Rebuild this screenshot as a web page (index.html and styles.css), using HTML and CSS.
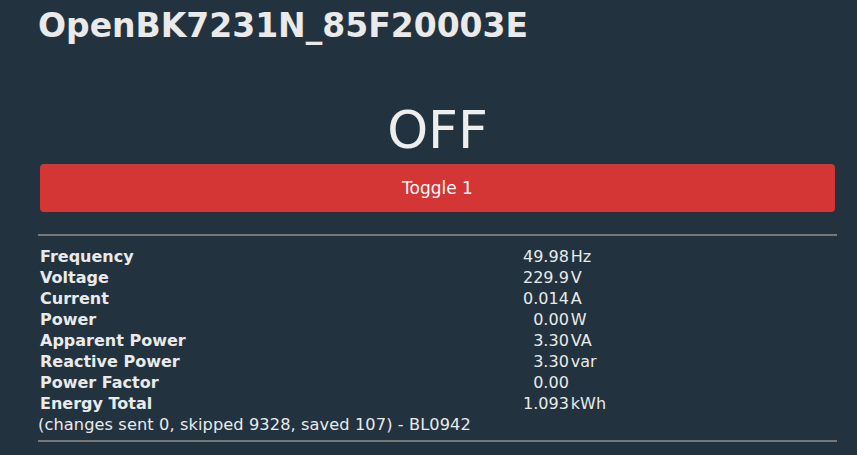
FILE: index.html
```html
<!DOCTYPE html>
<html>
<head>
<meta charset="utf-8">
<link rel="stylesheet" href="styles.css">
</head>
<body>
<div class="page">
  <h1 class="title">OpenBK7231N_85F20003E</h1>
  <div class="state">OFF</div>
  <button class="toggle">Toggle 1</button>
  <hr class="rule">
  <table class="readings">
    <tr><th>Frequency</th><td class="val">49.98</td><td class="unit">Hz</td></tr>
    <tr><th>Voltage</th><td class="val">229.9</td><td class="unit">V</td></tr>
    <tr><th>Current</th><td class="val">0.014</td><td class="unit">A</td></tr>
    <tr><th>Power</th><td class="val">0.00</td><td class="unit">W</td></tr>
    <tr><th>Apparent Power</th><td class="val">3.30</td><td class="unit">VA</td></tr>
    <tr><th>Reactive Power</th><td class="val">3.30</td><td class="unit">var</td></tr>
    <tr><th>Power Factor</th><td class="val">0.00</td><td class="unit"></td></tr>
    <tr><th>Energy Total</th><td class="val">1.093</td><td class="unit">kWh</td></tr>
  </table>
  <div class="note">(changes sent 0, skipped 9328, saved 107) - BL0942</div>
  <hr class="rule">
</div>
</body>
</html>
```
FILE: styles.css
```css
html, body {
  margin: 0;
  padding: 0;
  background: #22333f;
}
body {
  font-family: "DejaVu Sans", Verdana, sans-serif;
  color: #eaeaea;
}
.page {
  padding: 0 20px 0 38px;
}
.title {
  margin: 0;
  padding-top: 6px;
  font-size: 33px;
  font-weight: bold;
  line-height: 40px;
  color: #eaeaea;
}
.state {
  margin-top: 54px;
  text-align: center;
  font-size: 52px;
  line-height: 60px;
  color: #eeeeee;
}
.toggle {
  display: block;
  width: calc(100% - 4px);
  margin: 4px 2px 0;
  height: 48px;
  border: 0;
  border-radius: 4px;
  background: #d43535;
  color: #fafafa;
  font-family: "DejaVu Sans", Verdana, sans-serif;
  font-size: 17px;
}
.rule {
  margin: 22px 0 0;
  border: 0;
  border-top: 2px solid #777;
  height: 0;
}
.readings {
  margin-top: 10px;
  margin-left: 2px;
  border-collapse: collapse;
  font-size: 16px;
}
.readings th,
.readings td {
  padding: 0;
  height: 21px;
  line-height: 21px;
}
.readings th {
  width: 483px;
  text-align: left;
  font-weight: bold;
}
.readings .val {
  text-align: right;
}
.readings .unit {
  padding-left: 2px;
}
.note {
  font-size: 16.2px;
  letter-spacing: 0.1px;
  line-height: 21px;
}
.note + .rule {
  margin-top: 5px;
}
```
